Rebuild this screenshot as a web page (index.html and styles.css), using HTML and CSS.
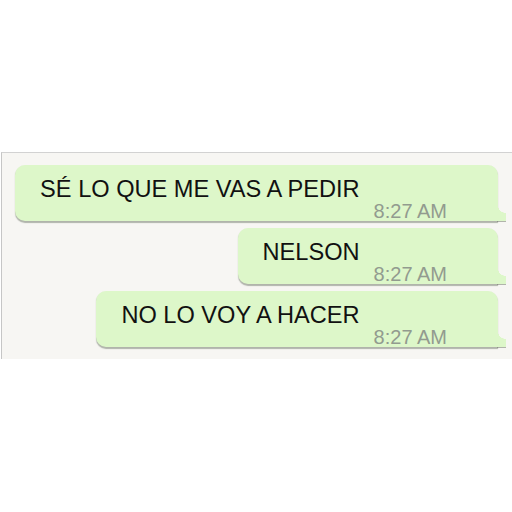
FILE: index.html
```html
<!DOCTYPE html>
<html>
<head>
    <title>Chat</title>
    <link rel="stylesheet" href="styles.css">
</head>
<body>
    <div class="chat">
        <div class="bubble">
            <span class="text">SÉ LO QUE ME VAS A PEDIR</span>
            <span class="time">8:27 AM</span>
        </div>
        <div class="bubble">
            <span class="text">NELSON</span>
            <span class="time">8:27 AM</span>
        </div>
        <div class="bubble">
            <span class="text">NO LO VOY A HACER</span>
            <span class="time">8:27 AM</span>
        </div>
    </div>
</body>
</html>
```

FILE: styles.css
```css
/* General */
body {
    margin: 0;
    background-color: #fff;
    font-family: "Liberation Sans", Arial, sans-serif;
}
/* Chat panel */
.chat {
    margin: 152px 0 0 1px;
    height: 194px;
    padding: 12px 14px 0 0;
    background-color: #f7f6f3;
    border-top: 1px solid #d2d2d2;
    border-left: 1px solid #c6c6c6;
    display: flex;
    flex-direction: column;
    align-items: flex-end;
    gap: 7px;
}
/* Bubbles */
.bubble {
    position: relative;
    display: flex;
    align-items: flex-start;
    gap: 14px;
    padding: 11px 51px 0 25px;
    height: 45px;
    background-color: #ddf7c9;
    border-radius: 10px 10px 0 10px;
    box-shadow: 0 1.5px 1px rgba(90, 100, 85, 0.45);
}
.bubble::after {
    content: "";
    position: absolute;
    right: -8px;
    bottom: 0;
    width: 9px;
    height: 15px;
    background: radial-gradient(ellipse 8px 7px at 100% 0, transparent 96%, #ddf7c9 100%);
    filter: drop-shadow(0 1.5px 0.5px rgba(90, 100, 85, 0.45));
}
.text {
    font-size: 23.6px;
    line-height: 27px;
    color: #111;
}
.time {
    margin-top: 25px;
    font-size: 20px;
    line-height: 20px;
    color: #929b8f;
}
```
